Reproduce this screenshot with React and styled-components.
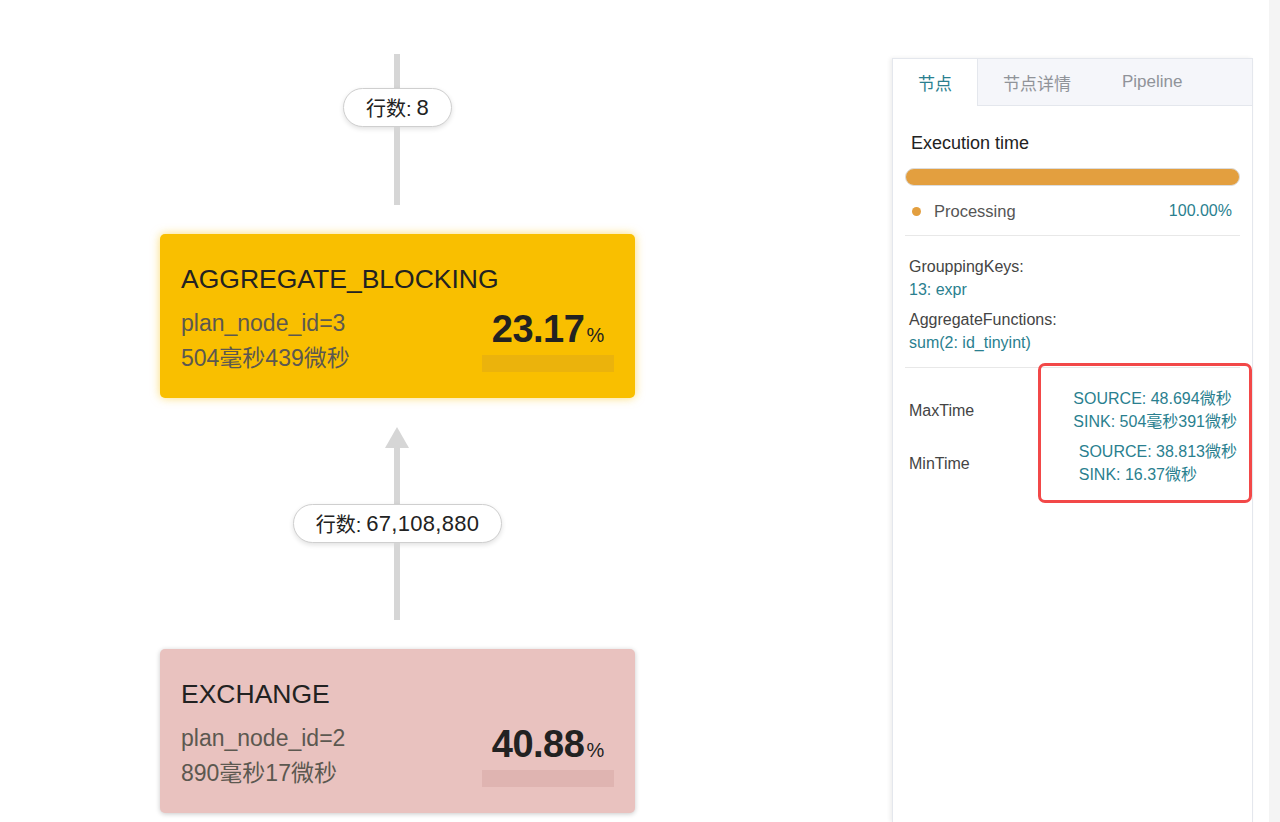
import { styled, createGlobalStyle } from "styled-components";

const nodes = [
  {
    name: "AGGREGATE_BLOCKING",
    id: 3,
    time: "504毫秒439微秒",
    percent: "23.17",
    bg: "#f9bf00",
    bar: "#ebb30c",
    shadow: "0 0 10px rgba(249, 191, 0, 0.55)",
  },
  {
    name: "EXCHANGE",
    id: 2,
    time: "890毫秒17微秒",
    percent: "40.88",
    bg: "#e9c2bf",
    bar: "#dfb4b1",
    shadow: "0 1px 5px rgba(0, 0, 0, 0.22)",
  },
];

function App() {
  return (
    <>
      <GlobalStyle />
      <Page>
        <Canvas>
          <Flow>
            <Edge>
              <Line $h={34} />
              <Pill>
                行数: <Count>8</Count>
              </Pill>
              <Line $h={78} />
            </Edge>
            <PlanNode node={nodes[0]} />
            <Edge>
              <Arrow />
              <Line $h={56} />
              <Pill>
                行数: <Count>67,108,880</Count>
              </Pill>
              <Line $h={77} />
            </Edge>
            <PlanNode node={nodes[1]} />
          </Flow>
        </Canvas>

        <Panel>
          <TabBar>
            <Tab $active>节点</Tab>
            <Tab>节点详情</Tab>
            <Tab>Pipeline</Tab>
          </TabBar>
          <PanelBody>
            <ExecTitle>Execution time</ExecTitle>
            <Progress />
            <Legend>
              <Dot />
              <LegendName>Processing</LegendName>
              <LegendValue>100.00%</LegendValue>
            </Legend>

            <Props>
              <PropGroup>
                <PropLabel>GrouppingKeys:</PropLabel>
                <PropValue>13: expr</PropValue>
              </PropGroup>
              <PropGroup>
                <PropLabel>AggregateFunctions:</PropLabel>
                <PropValue>sum(2: id_tinyint)</PropValue>
              </PropGroup>
            </Props>

            <TimeSection>
              <TimeRow>
                <PropLabel>MaxTime</PropLabel>
                <TimeValues>
                  <TimeLine>SOURCE: 48.694微秒</TimeLine>
                  <TimeLine>SINK: 504毫秒391微秒</TimeLine>
                </TimeValues>
              </TimeRow>
              <TimeRow>
                <PropLabel>MinTime</PropLabel>
                <TimeValues>
                  <TimeLine>SOURCE: 38.813微秒</TimeLine>
                  <TimeLine>SINK: 16.37微秒</TimeLine>
                </TimeValues>
              </TimeRow>
              <Highlight />
            </TimeSection>
          </PanelBody>
        </Panel>
        <Strip />
      </Page>
    </>
  );
}

function PlanNode({ node }) {
  return (
    <Node $bg={node.bg} $shadow={node.shadow}>
      <NodeTitle>{node.name}</NodeTitle>
      <NodeBody>
        <Meta>
          <MetaLine>plan_node_id={node.id}</MetaLine>
          <MetaLine>{node.time}</MetaLine>
        </Meta>
        <Stat>
          <Percent>
            {node.percent}
            <PercentSign>%</PercentSign>
          </Percent>
          <StatBar $c={node.bar} />
        </Stat>
      </NodeBody>
    </Node>
  );
}

export default App;

const GlobalStyle = createGlobalStyle`
  body {
    margin: 0;
    background: #fff;
    font-family: "Liberation Sans", "Noto Sans CJK SC", sans-serif;
  }
`;

const Page = styled.div`
  display: flex;
  height: 822px;
  overflow: hidden;
`;

const Canvas = styled.div`
  width: 892px;
  flex-shrink: 0;
  box-sizing: border-box;
  padding: 54px 0 0 160px;
`;

const Flow = styled.div`
  width: 475px;
  display: flex;
  flex-direction: column;
  align-items: center;
`;

const Edge = styled.div`
  display: flex;
  flex-direction: column;
  align-items: center;
  margin-bottom: 29px;
`;

const Line = styled.div`
  width: 6px;
  height: ${(p) => p.$h}px;
  background: #d6d6d6;
`;

const Arrow = styled.div`
  width: 0;
  height: 0;
  border-left: 12px solid transparent;
  border-right: 12px solid transparent;
  border-bottom: 21px solid #d6d6d6;
`;

const Pill = styled.div`
  height: 39px;
  box-sizing: border-box;
  padding: 0 22px;
  display: flex;
  align-items: center;
  gap: 5px;
  background: #fff;
  border: 1px solid #cfcfcf;
  border-radius: 20px;
  box-shadow: 0 2px 5px rgba(0, 0, 0, 0.12);
  font-size: 20px;
  color: #222;
  white-space: nowrap;
`;

const Count = styled.span`
  font-size: 22px;
  letter-spacing: 0.3px;
`;

const Node = styled.div`
  width: 475px;
  height: 164px;
  box-sizing: border-box;
  padding: 30px 21px 20px;
  border-radius: 5px;
  background: ${(p) => p.$bg};
  box-shadow: ${(p) => p.$shadow};
  display: flex;
  flex-direction: column;
  margin-bottom: 29px;
`;

const NodeTitle = styled.div`
  font-size: 26.5px;
  line-height: 30px;
  height: 30px;
  color: #222;
  margin-bottom: 12px;
`;

const NodeBody = styled.div`
  display: flex;
  justify-content: space-between;
  align-items: flex-end;
`;

const Meta = styled.div`
  display: flex;
  flex-direction: column;
  font-size: 23px;
  color: #5c5850;
`;

const MetaLine = styled.div`
  height: 35px;
  line-height: 35px;
  white-space: nowrap;
`;

const Stat = styled.div`
  width: 132px;
  display: flex;
  flex-direction: column;
  align-items: center;
  margin-bottom: 4px;
`;

const Percent = styled.div`
  font-size: 38px;
  line-height: 40px;
  height: 40px;
  font-weight: 700;
  color: #222;
  letter-spacing: -0.5px;
  white-space: nowrap;
`;

const PercentSign = styled.span`
  font-size: 20px;
  font-weight: 400;
  letter-spacing: 0;
  margin-left: 2px;
`;

const StatBar = styled.div`
  width: 132px;
  height: 17px;
  margin-top: 6px;
  background: ${(p) => p.$c};
`;

const Panel = styled.div`
  width: 361px;
  flex-shrink: 0;
  margin-top: 58px;
  box-sizing: border-box;
  border: 1px solid #e4e7ed;
  border-bottom: none;
  background: #fff;
  box-shadow: -2px 0 4px rgba(0, 0, 0, 0.07);
  display: flex;
  flex-direction: column;
`;

const TabBar = styled.div`
  display: flex;
  height: 47px;
  box-sizing: border-box;
  background: #f5f6fa;
  border-bottom: 1px solid #e4e7ed;
`;

const Tab = styled.div`
  padding: 0 25px;
  display: flex;
  align-items: center;
  font-size: 17px;
  color: ${(p) => (p.$active ? "#2a7f8f" : "#909399")};
  background: ${(p) => (p.$active ? "#fff" : "transparent")};
  border-right: 1px solid ${(p) => (p.$active ? "#e4e7ed" : "transparent")};
  margin-bottom: ${(p) => (p.$active ? "-1px" : "0")};
`;

const PanelBody = styled.div`
  padding: 25px 12px 0;
  display: flex;
  flex-direction: column;
`;

const ExecTitle = styled.div`
  font-size: 18px;
  line-height: 24px;
  color: #222;
  padding-left: 6px;
`;

const Progress = styled.div`
  height: 18px;
  margin-top: 13px;
  box-sizing: border-box;
  border: 1px solid #dcdcdc;
  border-radius: 9px;
  background: #e39f3f;
`;

const Legend = styled.div`
  display: flex;
  align-items: center;
  height: 24px;
  margin-top: 13px;
  padding: 0 8px 12px 7px;
  border-bottom: 1px solid #e8e8e8;
  font-size: 16px;
`;

const Dot = styled.span`
  width: 9px;
  height: 9px;
  border-radius: 50%;
  background: #e39f3f;
  margin-right: 13px;
`;

const LegendName = styled.span`
  flex: 1;
  font-size: 16.5px;
  color: #555;
`;

const LegendValue = styled.span`
  color: #2a7f8f;
`;

const Props = styled.div`
  padding: 19px 4px 13px;
  border-bottom: 1px solid #e8e8e8;
  display: flex;
  flex-direction: column;
  gap: 7px;
`;

const PropGroup = styled.div`
  font-size: 16px;
  line-height: 23px;
`;

const PropLabel = styled.div`
  font-size: 16px;
  line-height: 23px;
  color: #444;
`;

const PropValue = styled.div`
  color: #2a7f8f;
`;

const TimeSection = styled.div`
  position: relative;
  padding: 19px 3px 0 4px;
  display: flex;
  flex-direction: column;
  gap: 7px;
`;

const TimeRow = styled.div`
  display: flex;
  justify-content: space-between;
  align-items: center;
`;

const TimeValues = styled.div`
  font-size: 16px;
  color: #2a7f8f;
`;

const TimeLine = styled.div`
  height: 23px;
  line-height: 23px;
  white-space: nowrap;
`;

const Highlight = styled.div`
  position: absolute;
  top: -5px;
  left: 133px;
  right: -12px;
  height: 140px;
  box-sizing: border-box;
  border: 3px solid #f24848;
  border-radius: 7px;
  pointer-events: none;
`;

const Strip = styled.div`
  width: 11px;
  margin-left: 16px;
  flex-shrink: 0;
  background: #f4f4f4;
`;
